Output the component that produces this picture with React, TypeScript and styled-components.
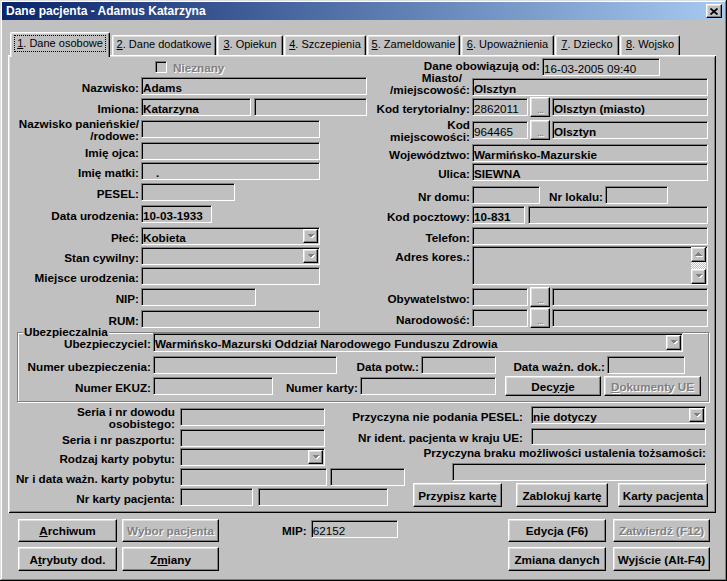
import styled, { createGlobalStyle, css } from "styled-components";

const GlobalStyle = createGlobalStyle`
  html, body {
    margin: 0;
    padding: 0;
    background: #c0c0c0;
  }
  body {
    font-family: "Liberation Sans", Arial, sans-serif;
    font-size: 11.7px;
    color: #000;
  }
  *, *::before, *::after {
    box-sizing: border-box;
  }
`;

const raised = css`
  border: 1px solid;
  border-color: #fff #000 #000 #fff;
  box-shadow: inset -1px -1px #808080, inset 1px 1px #dfdfdf;
`;

const sunken = css`
  border: 1px solid;
  border-color: #808080 #fff #fff #808080;
  box-shadow: inset 1px 1px #000;
`;

const greyedOut = css`
  color: #808080;
  text-shadow: 1px 1px 0 #fff;
`;

const Window = styled.div`
  width: 727px;
  height: 581px;
  padding: 2px;
  background: #c0c0c0;
  box-shadow: inset -1px -1px #000, inset 1px 1px #dfdfdf,
    inset -2px -2px #808080, inset 2px 2px #fff;
  display: flex;
  flex-direction: column;
  overflow: hidden;
`;

const TitleBar = styled.div`
  height: 18px;
  flex-shrink: 0;
  display: flex;
  align-items: center;
  padding: 0 3px 0 4px;
  background: linear-gradient(90deg, #0a246a 0%, #a6caf0 100%);
  color: #fff;
  font-size: 12px;
  font-weight: bold;
  line-height: 13px;
`;

const CloseButton = styled.div`
  ${raised};
  margin-left: auto;
  width: 16px;
  height: 14px;
  background: #c0c0c0;
  display: grid;
  place-items: center;
`;

const Body = styled.div`
  flex: 1;
  padding: 12px 9px 0 6px;
  display: flex;
  flex-direction: column;
`;

const TabStrip = styled.div`
  height: 23px;
  flex-shrink: 0;
  display: flex;
  align-items: flex-end;
  padding-left: 2px;
  position: relative;
  z-index: 1;
  font-size: 11px;
`;

const Tab = styled.div<{ $w: number; $ml: number; $active?: boolean }>`
  width: ${(p) => p.$w}px;
  height: ${(p) => (p.$active ? 25 : 20)}px;
  margin-left: ${(p) => p.$ml}px;
  margin-bottom: ${(p) => (p.$active ? -2 : 0)}px;
  background: #c0c0c0;
  border-top: 1px solid #fff;
  border-left: 1px solid #fff;
  border-right: 1px solid #000;
  border-radius: 2px 2px 0 0;
  box-shadow: inset -1px 0 #808080, inset 1px 1px #dfdfdf;
  display: flex;
  justify-content: center;
  padding-top: 2px;
  line-height: 13px;
  white-space: nowrap;
`;

const FocusBox = styled.span`
  border: 1px dotted #000;
  padding: 1px 2px;
  height: 17px;
`;

const Panel = styled.div`
  position: relative;
  z-index: 0;
  height: 458px;
  flex-shrink: 0;
  box-shadow: inset 1px 1px #fff, inset -1px -1px #000, inset 2px 2px #dfdfdf,
    inset -2px -2px #808080;
  display: flex;
  flex-direction: column;
`;

const TopSection = styled.div`
  display: flex;
  height: 273px;
  flex-shrink: 0;
`;

const Column = styled.div<{ $w: number }>`
  width: ${(p) => p.$w}px;
  flex-shrink: 0;
  display: flex;
  flex-direction: column;
`;

const Row = styled.div<{
  $mt?: number;
  $h?: number;
  $gap?: number;
  $mr?: number;
  $top?: boolean;
}>`
  display: flex;
  align-items: ${(p) => (p.$top ? "flex-start" : "center")};
  height: ${(p) => p.$h ?? 18}px;
  margin-top: ${(p) => p.$mt ?? 0}px;
  margin-right: ${(p) => p.$mr ?? 0}px;
  gap: ${(p) => p.$gap ?? 2}px;
  flex-shrink: 0;
`;

const Label = styled.div<{ $w?: number; $lh?: number; $up?: number; $mt?: number }>`
  ${(p) => (p.$w !== undefined ? `width: ${p.$w}px;` : "")}
  flex-shrink: 0;
  display: flex;
  flex-direction: column;
  align-items: flex-end;
  font-weight: bold;
  white-space: nowrap;
  line-height: ${(p) => p.$lh ?? 13}px;
  padding-top: 2px;
  margin-top: ${(p) => p.$mt ?? 0}px;
  margin-bottom: ${(p) => p.$up ?? 0}px;
`;

const Indent = styled.span<{ $r: number }>`
  padding-right: ${(p) => p.$r}px;
`;

const Caption = styled.div<{ $mt: number }>`
  font-weight: bold;
  white-space: nowrap;
  line-height: 13px;
  margin: ${(p) => p.$mt}px 2px 0 0;
`;

const Field = styled.div<{ $w?: number; $h?: number; $ml?: number; $regular?: boolean }>`
  ${sunken};
  width: ${(p) => (p.$w ? `${p.$w}px` : "auto")};
  flex: ${(p) => (p.$w ? "0 0 auto" : "1 1 auto")};
  height: ${(p) => p.$h ?? 18}px;
  margin-left: ${(p) => p.$ml ?? 0}px;
  background: #c0c0c0;
  padding: 2px 1px 0 1px;
  display: flex;
  align-items: center;
  font-weight: ${(p) => (p.$regular ? "normal" : "bold")};
  line-height: 13px;
  white-space: pre;
  overflow: hidden;
`;

const MultiField = styled(Field)`
  align-items: stretch;
  padding: 0 1px 0 1px;
`;

const DropButton = styled.div<{ $h?: number }>`
  ${raised};
  margin-left: auto;
  margin-top: -2px;
  width: 15px;
  height: ${(p) => p.$h ?? 14}px;
  flex-shrink: 0;
  background: #c0c0c0;
  display: grid;
  place-items: center;
`;

const ScrollColumn = styled.div`
  margin-left: auto;
  width: 15px;
  display: flex;
  flex-direction: column;
`;

const ScrollButton = styled.div`
  ${raised};
  height: 15px;
  flex-shrink: 0;
  background: #c0c0c0;
  display: grid;
  place-items: center;
`;

const ScrollTrack = styled.div`
  flex: 1;
  background: repeating-conic-gradient(#fff 0 25%, #c0c0c0 0 50%) 0 0 / 2px 2px;
`;

const DotsButton = styled.div`
  ${raised};
  width: 20px;
  height: 20px;
  flex-shrink: 0;
  background: #c0c0c0;
  display: flex;
  justify-content: center;
  align-items: flex-end;
  padding-bottom: 2px;
  font-size: 11px;
  line-height: 10px;
  letter-spacing: -1px;
  ${greyedOut};
`;

const CheckWrap = styled.div`
  margin-left: 14px;
  display: flex;
  align-items: center;
  gap: 6px;
`;

const CheckBox = styled.span`
  ${sunken};
  width: 12px;
  height: 12px;
  background: #c0c0c0;
`;

const GreyText = styled.span`
  font-weight: bold;
  padding-top: 1px;
  ${greyedOut};
`;

const Group = styled.div`
  position: relative;
  height: 70px;
  flex-shrink: 0;
  margin: 4px 7px 0 9px;
  border: 1px solid #808080;
  box-shadow: inset 1px 1px #fff, 1px 1px #fff;
  display: flex;
  flex-direction: column;
`;

const GroupTitle = styled.span`
  position: absolute;
  top: -8px;
  left: 5px;
  padding: 0 1px;
  background: #c0c0c0;
  font-weight: bold;
  line-height: 13px;
`;

const BottomGrid = styled.div`
  display: grid;
  grid-template-columns: 322px 75px 303px;
  padding-right: 8px;
`;

const BottomLeft = styled.div`
  grid-column: 1 / 3;
  grid-row: 1;
  display: flex;
  flex-direction: column;
`;

const BottomRight = styled.div`
  grid-column: 2 / 4;
  grid-row: 1;
  display: flex;
  flex-direction: column;
  align-items: flex-end;
`;

const Button = styled.button<{ $w: number; $h?: number; $ml?: number }>`
  ${raised};
  width: ${(p) => p.$w}px;
  height: ${(p) => p.$h ?? 24}px;
  margin-left: ${(p) => p.$ml ?? 0}px;
  flex-shrink: 0;
  padding: 0;
  background: #c0c0c0;
  font-family: "Liberation Sans", Arial, sans-serif;
  font-size: 11.7px;
  font-weight: bold;
  color: #000;
  line-height: 13px;
  white-space: nowrap;
  &:disabled {
    ${greyedOut};
  }
`;

const Footer = styled.div`
  display: flex;
  align-items: flex-start;
  padding: 6px 6px 0 10px;
`;

const ButtonGrid = styled.div<{ $cols: string; $gap: number; $ml?: string }>`
  display: grid;
  grid-template-columns: ${(p) => p.$cols};
  grid-template-rows: 23px 24px;
  column-gap: ${(p) => p.$gap}px;
  row-gap: 5px;
  margin-left: ${(p) => p.$ml ?? "0"};
  & > button {
    width: 100%;
    height: 100%;
  }
`;

const MipBox = styled.div`
  margin: 1px 0 0 63px;
  display: flex;
  align-items: center;
  gap: 4px;
`;

const DropArrow = () => (
  <svg width="8" height="5" viewBox="0 0 8 5" shapeRendering="crispEdges">
    <polygon points="1,1 8,1 4.5,4.5" fill="#fff" />
    <polygon points="0,0 7,0 3.5,3.5" fill="#808080" />
  </svg>
);

const UpArrow = () => (
  <svg width="8" height="5" viewBox="0 0 8 5" shapeRendering="crispEdges">
    <polygon points="1,4.5 8,4.5 4.5,1" fill="#fff" />
    <polygon points="0,3.5 7,3.5 3.5,0" fill="#808080" />
  </svg>
);

const Combo = ({ w, h, text }: { w: number; h?: number; text?: string }) => (
  <Field $w={w} $h={h}>
    <span>{text}</span>
    <DropButton $h={h ? h - 4 : 14}>
      <DropArrow />
    </DropButton>
  </Field>
);

const tabs = [
  { n: "1", t: ". Dane osobowe", w: 100, ml: 0 },
  { n: "2", t: ". Dane dodatkowe", w: 104, ml: 2 },
  { n: "3", t: ". Opiekun", w: 66, ml: 1 },
  { n: "4", t: ". Szczepienia", w: 82, ml: 1 },
  { n: "5", t: ". Zameldowanie", w: 93, ml: 1 },
  { n: "6", t: ". Upoważnienia", w: 93, ml: 1 },
  { n: "7", t: ". Dziecko", w: 64, ml: 1 },
  { n: "8", t: ". Wojsko", w: 60, ml: 1 },
];

function App() {
  return (
    <>
      <GlobalStyle />
      <Window>
        <TitleBar>
          <span>Dane pacjenta - Adamus Katarzyna</span>
          <CloseButton>
            <svg width="8" height="7" viewBox="0 0 8 7">
              <path d="M0.5 0.5 L7.5 6.5 M7.5 0.5 L0.5 6.5" stroke="#000" strokeWidth="1.7" />
            </svg>
          </CloseButton>
        </TitleBar>
        <Body>
          <TabStrip>
            {tabs.map((tab, i) =>
              i === 0 ? (
                <Tab key={tab.n} $w={tab.w} $ml={tab.ml} $active>
                  <FocusBox>
                    <u>{tab.n}</u>
                    {tab.t}
                  </FocusBox>
                </Tab>
              ) : (
                <Tab key={tab.n} $w={tab.w} $ml={tab.ml}>
                  <span>
                    <u>{tab.n}</u>
                    {tab.t}
                  </span>
                </Tab>
              )
            )}
          </TabStrip>
          <Panel>
            <TopSection>
              <Column $w={362}>
                <Row $mt={3}>
                  <Label $w={131} />
                  <CheckWrap>
                    <CheckBox />
                    <GreyText>Nieznany</GreyText>
                  </CheckWrap>
                </Row>
                <Row $mt={1}>
                  <Label $w={131}>Nazwisko:</Label>
                  <Field $w={226}>Adams</Field>
                </Row>
                <Row $mt={3}>
                  <Label $w={131}>Imiona:</Label>
                  <Field $w={110}>Katarzyna</Field>
                  <Field $w={113} $ml={1} />
                </Row>
                <Row $mt={4}>
                  <Label $w={131} $lh={12}>
                    <span>Nazwisko panieńskie/</span>
                    <span>/rodowe:</span>
                  </Label>
                  <Field $w={179} />
                </Row>
                <Row $mt={4}>
                  <Label $w={131}>Imię ojca:</Label>
                  <Field $w={179} />
                </Row>
                <Row $mt={2}>
                  <Label $w={131}>Imię matki:</Label>
                  <Field $w={179}>{"    ."}</Field>
                </Row>
                <Row $mt={3}>
                  <Label $w={131}>PESEL:</Label>
                  <Field $w={94} />
                </Row>
                <Row $mt={4}>
                  <Label $w={131}>Data urodzenia:</Label>
                  <Field $w={71}>10-03-1933</Field>
                </Row>
                <Row $mt={4}>
                  <Label $w={131}>Płeć:</Label>
                  <Combo w={179} text="Kobieta" />
                </Row>
                <Row $mt={2}>
                  <Label $w={131}>Stan cywilny:</Label>
                  <Combo w={179} />
                </Row>
                <Row $mt={2}>
                  <Label $w={131}>Miejsce urodzenia:</Label>
                  <Field $w={179} />
                </Row>
                <Row $mt={3}>
                  <Label $w={131}>NIP:</Label>
                  <Field $w={115} />
                </Row>
                <Row $mt={4}>
                  <Label $w={131}>RUM:</Label>
                  <Field $w={179} />
                </Row>
              </Column>

              <Column $w={338}>
                <Row $mt={3}>
                  <Label $w={170} $lh={12} $mt={-4}>
                    Dane obowiązują od:
                  </Label>
                  <Field $w={118} $regular>
                    16-03-2005 09:40
                  </Field>
                </Row>
                <Row $mt={2}>
                  <Label $w={100} $lh={12} $up={8}>
                    <Indent $r={8}>Miasto/</Indent>
                    <span>/miejscowość:</span>
                  </Label>
                  <Field $w={236}>Olsztyn</Field>
                </Row>
                <Row $mt={2}>
                  <Label $w={100}>Kod terytorialny:</Label>
                  <Field $w={56} $regular>
                    2862011
                  </Field>
                  <DotsButton>...</DotsButton>
                  <Field $w={156}>Olsztyn (miasto)</Field>
                </Row>
                <Row $mt={5}>
                  <Label $w={100} $lh={12}>
                    <span>Kod</span>
                    <span>miejscowości:</span>
                  </Label>
                  <Field $w={56} $regular>
                    964465
                  </Field>
                  <DotsButton>...</DotsButton>
                  <Field $w={156}>Olsztyn</Field>
                </Row>
                <Row $mt={5}>
                  <Label $w={100}>Województwo:</Label>
                  <Field $w={236}>Warmińsko-Mazurskie</Field>
                </Row>
                <Row $mt={1}>
                  <Label $w={100}>Ulica:</Label>
                  <Field $w={236}>SIEWNA</Field>
                </Row>
                <Row $mt={5}>
                  <Label $w={100}>Nr domu:</Label>
                  <Field $w={68} />
                  <Label $w={61}>Nr lokalu:</Label>
                  <Field $w={63} />
                </Row>
                <Row $mt={2}>
                  <Label $w={100}>Kod pocztowy:</Label>
                  <Field $w={53}>10-831</Field>
                  <Field $w={180} $ml={1} />
                </Row>
                <Row $mt={3}>
                  <Label $w={100}>Telefon:</Label>
                  <Field $w={236} />
                </Row>
                <Row $mt={1} $h={39} $top>
                  <Label $w={100} $mt={2}>
                    Adres kores.:
                  </Label>
                  <MultiField $w={236} $h={39}>
                    <ScrollColumn>
                      <ScrollButton>
                        <UpArrow />
                      </ScrollButton>
                      <ScrollTrack />
                      <ScrollButton>
                        <DropArrow />
                      </ScrollButton>
                    </ScrollColumn>
                  </MultiField>
                </Row>
                <Row $mt={3}>
                  <Label $w={100}>Obywatelstwo:</Label>
                  <Field $w={56} />
                  <DotsButton>...</DotsButton>
                  <Field $w={156} />
                </Row>
                <Row $mt={3}>
                  <Label $w={100}>Narodowość:</Label>
                  <Field $w={56} />
                  <DotsButton>...</DotsButton>
                  <Field $w={156} />
                </Row>
              </Column>
            </TopSection>

            <Group>
              <GroupTitle>Ubezpieczalnia</GroupTitle>
              <Row $h={19}>
                <Label $w={133}>Ubezpieczyciel:</Label>
                <Combo
                  w={530}
                  h={19}
                  text="Warmińsko-Mazurski Oddział Narodowego Funduszu Zdrowia"
                />
              </Row>
              <Row $mt={4}>
                <Label $w={133}>Numer ubezpieczenia:</Label>
                <Field $w={184} />
                <Label $w={80}>Data potw.:</Label>
                <Field $w={75} />
                <Label $w={107}>Data ważn. dok.:</Label>
                <Field $w={78} />
              </Row>
              <Row $mt={2} $h={20}>
                <Label $w={133}>Numer EKUZ:</Label>
                <Field $w={120} />
                <Label $w={83}>Numer karty:</Label>
                <Field $w={136} />
                <Button $w={96} $h={20} $ml={7}>
                  Dec<u>y</u>zje
                </Button>
                <Button $w={97} $h={20} $ml={1} disabled>
                  <u>D</u>okumenty UE
                </Button>
              </Row>
            </Group>

            <BottomGrid>
              <BottomLeft>
                <Row $mt={6} $gap={5}>
                  <Label $w={167} $lh={12}>
                    <span>Seria i nr dowodu</span>
                    <span>osobistego:</span>
                  </Label>
                  <Field $w={145} />
                </Row>
                <Row $mt={3} $gap={5}>
                  <Label $w={167}>Seria i nr paszportu:</Label>
                  <Field $w={145} />
                </Row>
                <Row $mt={1} $gap={5}>
                  <Label $w={167}>Rodzaj karty pobytu:</Label>
                  <Combo w={145} />
                </Row>
                <Row $mt={2} $gap={5}>
                  <Label $w={167}>Nr i data ważn. karty pobytu:</Label>
                  <Field $w={147} />
                  <Field $w={75} $ml={-2} />
                </Row>
                <Row $mt={2} $gap={5}>
                  <Label $w={167}>Nr karty pacjenta:</Label>
                  <Field $w={73} />
                  <Field $w={130} />
                </Row>
              </BottomLeft>

              <BottomRight>
                <Row $mt={4} $gap={8} $mr={2}>
                  <Label>Przyczyna nie podania PESEL:</Label>
                  <Combo w={175} text="nie dotyczy" />
                </Row>
                <Row $mt={3} $gap={8} $mr={2}>
                  <Label>Nr ident. pacjenta w kraju UE:</Label>
                  <Field $w={175} $h={17} />
                </Row>
                <Caption $mt={1}>Przyczyna braku możliwości ustalenia tożsamości:</Caption>
                <Row $mt={4} $mr={2}>
                  <Field $w={254} />
                </Row>
                <Row $mt={2} $h={24} $gap={0}>
                  <Button $w={89}>Przypisz kartę</Button>
                  <Button $w={92} $ml={14}>
                    Zablokuj kartę
                  </Button>
                  <Button $w={90} $ml={10}>
                    Karty pacjenta
                  </Button>
                </Row>
              </BottomRight>
            </BottomGrid>
          </Panel>

          <Footer>
            <ButtonGrid $cols="99px 97px" $gap={5}>
              <Button $w={99}>
                <u>A</u>rchiwum
              </Button>
              <Button $w={97} disabled>
                Wybor pacjenta
              </Button>
              <Button $w={99}>
                A<u>t</u>rybuty dod.
              </Button>
              <Button $w={97}>
                Z<u>m</u>iany
              </Button>
            </ButtonGrid>
            <MipBox>
              <Label>MIP:</Label>
              <Field $w={87} $regular>
                62152
              </Field>
            </MipBox>
            <ButtonGrid $cols="98px 97px" $gap={7} $ml="auto">
              <Button $w={98}>Edycja (F6)</Button>
              <Button $w={97} disabled>
                Zatwierdź (F12)
              </Button>
              <Button $w={98}>Zmiana danych</Button>
              <Button $w={97}>Wyjście (Alt-F4)</Button>
            </ButtonGrid>
          </Footer>
        </Body>
      </Window>
    </>
  );
}

export default App;
